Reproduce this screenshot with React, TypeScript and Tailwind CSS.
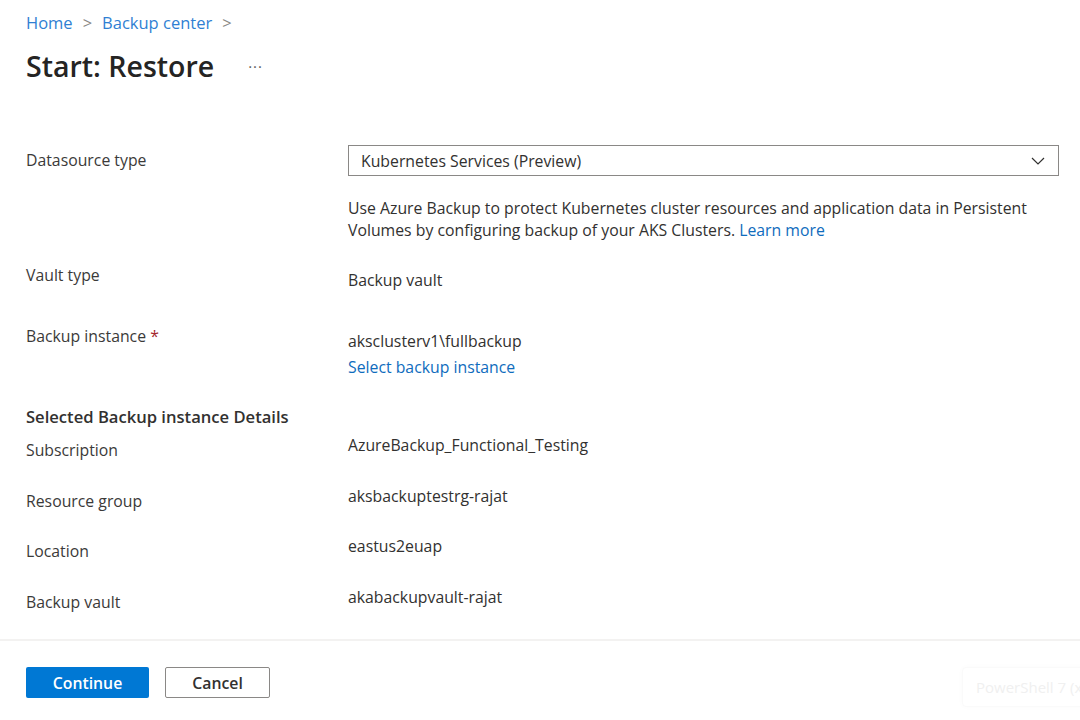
import React from 'react'

const font = { fontFamily: '"Segoe UI", "Open Sans", "Noto Sans", sans-serif' }

function Row({
  label,
  children,
  className = '',
}: {
  label: React.ReactNode
  children: React.ReactNode
  className?: string
}) {
  return (
    <div className={`flex ${className}`}>
      <div className="w-[322px] shrink-0 text-[#3b3a39]">{label}</div>
      <div className="flex-1 text-[#323130]">{children}</div>
    </div>
  )
}

export default function App() {
  return (
    <div
      className="relative w-[1080px] h-[720px] overflow-hidden bg-white text-[15.8px] leading-[22px]"
      style={font}
    >
      <div className="px-[26px]">
        {/* breadcrumb */}
        <nav className="flex items-center gap-[10px] pt-[12px] text-[16.5px] text-[#2f7fd3]">
          <span>Home</span>
          <span className="text-[#8a8886]">&gt;</span>
          <span>Backup center</span>
          <span className="text-[#8a8886]">&gt;</span>
        </nav>

        <div className="flex items-center mt-[12px]">
          <h1 className="text-[28.5px] leading-[40px] font-semibold text-[#252423]">
            Start: Restore
          </h1>
          <span className="ml-[34px] text-[15px] text-[#605e5c] tracking-[1px]">
            ···
          </span>
        </div>

        {/* form */}
        <div className="mt-[59px]">
          <Row label={<div className="pt-[4px]">Datasource type</div>}>
            <div className="flex items-center justify-between h-[31px] w-[711px] border border-[#8a8886] px-[12px]">
              <span>Kubernetes Services (Preview)</span>
              <svg width="16" height="16" viewBox="0 0 16 16" fill="none">
                <path d="M2 5l6 6 6-6" stroke="#323130" strokeWidth="1.2" />
              </svg>
            </div>
            <div className="mt-[21px] w-[712px]">
              <div>
                Use Azure Backup to protect Kubernetes cluster resources and application data in
                Persistent
              </div>
              <div>
                Volumes by configuring backup of your AKS Clusters.{' '}
                <a className="text-[#0f6cbd]">Learn more</a>
              </div>
            </div>
          </Row>

          <Row label="Vault type" className="mt-[23px]">
            <div className="pt-[5px]">Backup vault</div>
          </Row>

          <Row
            label={
              <span>
                Backup instance <span className="text-[#a4262c]">*</span>
              </span>
            }
            className="mt-[34px]"
          >
            <div className="pt-[5px]">aksclusterv1\fullbackup</div>
            <div className="mt-[4px] text-[#0f6cbd]">Select backup instance</div>
          </Row>

          <h2 className="mt-[28px] text-[16.6px] font-semibold text-[#323130]">
            Selected Backup instance Details
          </h2>

          <div className="flex flex-col gap-[24.6px] mt-[7px]">
            {[
              ['Subscription', 'AzureBackup_Functional_Testing'],
              ['Resource group', 'aksbackuptestrg-rajat'],
              ['Location', 'eastus2euap'],
              ['Backup vault', 'akabackupvault-rajat'],
            ].map(([l, v]) => (
              <Row key={l} label={<div className="pt-[4px]">{l}</div>}>
                <div className="-mt-[1px]">{v}</div>
              </Row>
            ))}
          </div>
        </div>
      </div>

      {/* footer */}
      <div className="absolute left-0 right-0 top-[639px] border-t-2 border-[#f3f2f1]">
        <div className="flex gap-[16px] px-[26px] pt-[26px]">
          <button className="w-[123px] h-[31px] bg-[#0078d4] text-white font-semibold rounded-[2px]">
            Continue
          </button>
          <button className="w-[105px] h-[31px] border border-[#8a8886] text-[#323130] font-semibold rounded-[2px]">
            Cancel
          </button>
        </div>
      </div>

      <div className="absolute left-[962px] top-[667px] h-[40px] w-[140px] rounded-[4px] border border-[#fafafa] shadow-[0_0_6px_rgba(0,0,0,0.02)] px-[13px] pt-[8px] text-[15px] text-[#f0f0f0] whitespace-nowrap">
        PowerShell 7 (x
      </div>
    </div>
  )
}
